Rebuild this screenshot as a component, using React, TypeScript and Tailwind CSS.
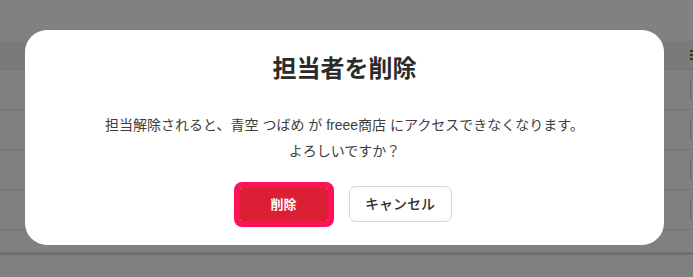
import React from "react";

const rows = [0, 1, 2, 3];

const DeleteAssigneeDialog: React.FC = () => {
  return (
    <div className="absolute left-[25px] top-[30px] w-[639px] rounded-[22px] bg-white px-6 pt-6 pb-[23px] text-center">
      <h2 className="text-[24px] leading-[30px] font-bold text-[#2b2b2b]">担当者を削除</h2>

      <p className="mt-[28px] text-[14px] leading-[26px] text-[#3d3d3d]">
        担当解除されると、青空 つばめ が freee商店 にアクセスできなくなります。
        <br />
        よろしいですか？
      </p>

      {/* Actions */}
      <div className="mt-[22px] flex items-center justify-center gap-[21px] pl-[2px]">
        <button className="mt-[1px] h-[33px] w-[88px] rounded-[2px] bg-[#db1f35] text-[13px] font-bold text-white outline-[6px] outline-solid outline-[#ff1158] outline-offset-0">
          削除
        </button>
        <button className="h-[36px] w-[103px] rounded-[7px] border border-[#d6d6d6] bg-white text-[14px] font-medium text-[#2f2f2f]">
          キャンセル
        </button>
      </div>
    </div>
  );
};

export default function App() {
  return (
    <div
      className="relative h-[277px] w-[693px] overflow-hidden bg-[#808080]"
      style={{ fontFamily: '"Liberation Sans", "Noto Sans CJK JP", sans-serif' }}
    >
      {/* dimmed table behind the modal */}
      <div className="h-[41px] bg-[#818181]" />
      <div className="flex h-[29px] items-center border-b border-[#727272] bg-[#7a7a7a]">
        <div className="ml-[690px] flex h-[10px] w-[3px] flex-col justify-between">
          <div className="h-[2px] bg-[#3a3322]" />
          <div className="h-[2px] bg-[#3a3322]" />
          <div className="h-[2px] bg-[#3a3322]" />
        </div>
      </div>
      {rows.map((r) => (
        <div key={r} className="flex h-[40px] items-center border-b border-[#727272] bg-[#808080]">
          <div className="ml-[690px] h-[26px] w-[30px] shrink-0 rounded-[6px] border border-[#6c6c6c]" />
        </div>
      ))}
      <div className="h-[25px] border-b-[3px] border-[#6f6f6f] bg-[#808080]" />

      <DeleteAssigneeDialog />
    </div>
  );
}
